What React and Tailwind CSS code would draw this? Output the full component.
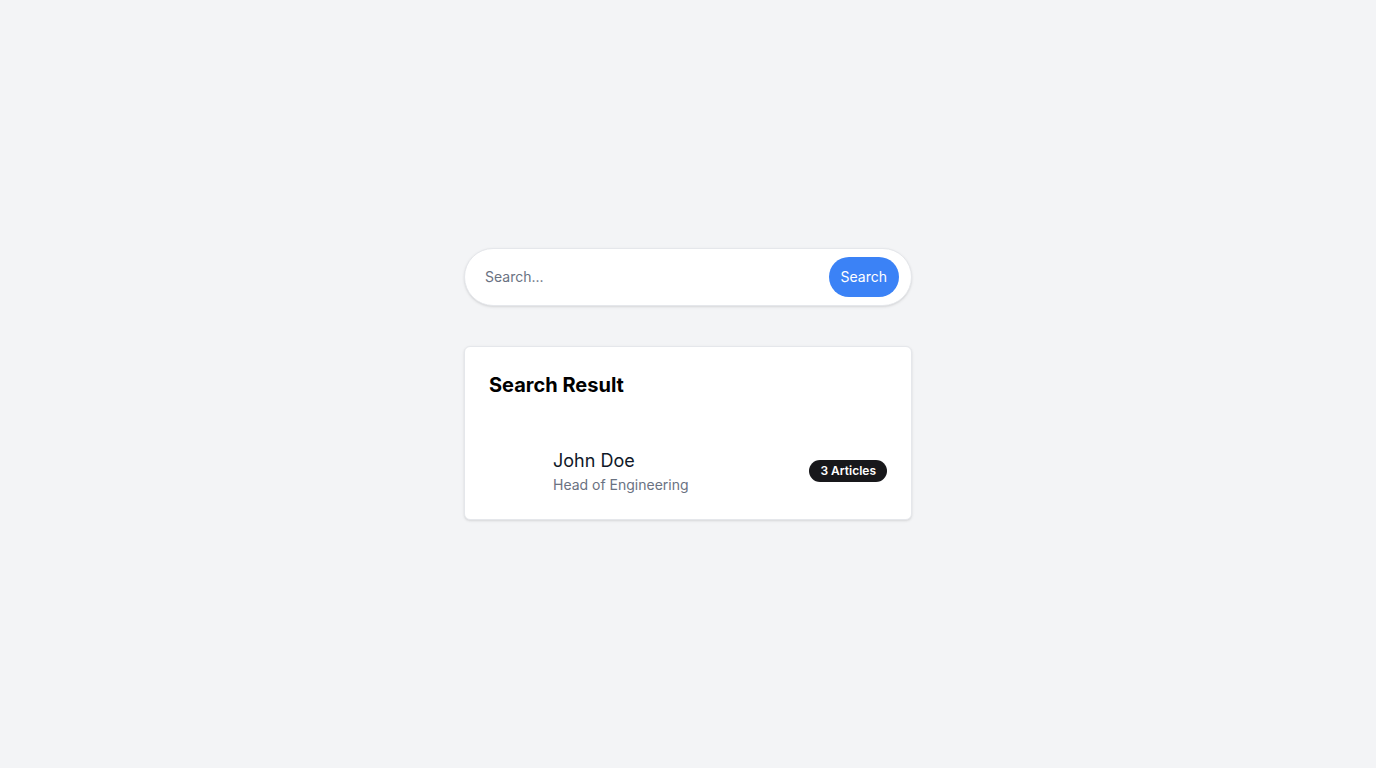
import React from "react";

export default function App() {
  return (
    <div className="min-h-screen bg-gray-100 flex flex-col items-center justify-center font-['Inter',_'Liberation_Sans',_sans-serif]">
      <div className="w-[448px]">
        {/* Search bar */}
        <div className="flex items-center bg-white border border-gray-200 rounded-full shadow-sm pl-5 pr-3 py-2">
          <input
            type="text"
            placeholder="Search..."
            className="flex-1 bg-transparent outline-none text-sm text-gray-700 placeholder:text-gray-500"
          />
          <button className="h-10 px-3 rounded-full bg-[#3b82f6] text-white text-sm">
            Search
          </button>
        </div>

        {/* Results card */}
        <div className="mt-10 bg-white border border-gray-200 rounded-md shadow-sm p-6">
          <h2 className="text-xl font-bold text-black">Search Result</h2>
          <div className="mt-12 flex items-center">
            <div className="w-12 h-12 shrink-0" />
            <div className="ml-4 flex-1">
              <div className="text-lg leading-7 text-gray-900">John Doe</div>
              <div className="text-sm text-gray-500">Head of Engineering</div>
            </div>
            <span className="px-[11px] py-0.5 rounded-full bg-[#18181b] text-white text-xs font-semibold leading-[18px]">
              3 Articles
            </span>
          </div>
        </div>
      </div>
    </div>
  );
}
